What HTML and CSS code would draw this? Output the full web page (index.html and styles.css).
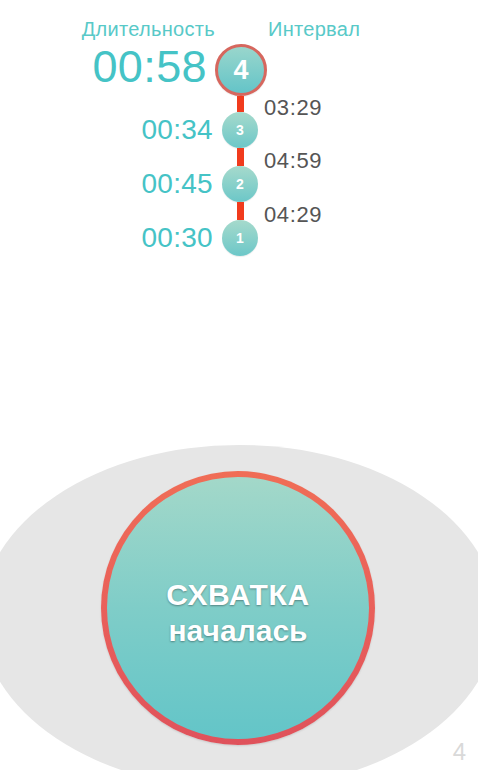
FILE: index.html
```html
<!DOCTYPE html>
<html lang="ru">
<head>
<meta charset="utf-8">
<title>Схватки</title>
<link rel="stylesheet" href="styles.css">
</head>
<body>
<div class="screen">
  <div class="timeline">
    <div class="head head-left">Длительность</div>
    <div></div>
    <div class="head head-right">Интервал</div>

    <div class="time time-big">00:58</div>
    <div class="node node-big"><span>4</span></div>
    <div></div>

    <div></div>
    <div class="link link-first"></div>
    <div class="gap">03:29</div>

    <div class="time">00:34</div>
    <div class="node"><span>3</span></div>
    <div></div>

    <div></div>
    <div class="link"></div>
    <div class="gap">04:59</div>

    <div class="time">00:45</div>
    <div class="node"><span>2</span></div>
    <div></div>

    <div></div>
    <div class="link"></div>
    <div class="gap">04:29</div>

    <div class="time">00:30</div>
    <div class="node"><span>1</span></div>
    <div></div>
  </div>

  <div class="stage">
    <div class="button-ring">
      <div class="button">
        <div class="button-title">СХВАТКА</div>
        <div class="button-sub">началась</div>
      </div>
    </div>
  </div>

  <div class="counter">4</div>
</div>
</body>
</html>
```

FILE: styles.css
```css
html, body {
  margin: 0;
  padding: 0;
  background: #ffffff;
}

.screen {
  position: relative;
  width: 478px;
  height: 770px;
  overflow: hidden;
  font-family: "Liberation Sans", Arial, sans-serif;
}

.timeline {
  display: grid;
  grid-template-columns: 214px 52px 1fr;
  padding-top: 18px;
  align-items: center;
}

.head {
  font-size: 20px;
  line-height: 22px;
  letter-spacing: 0.3px;
  color: #58c9c8;
  margin-bottom: 4px;
}

.head-left {
  text-align: right;
  margin-right: -1px;
}

.head-right {
  padding-left: 2px;
}

.time {
  text-align: right;
  font-size: 28px;
  line-height: 36px;
  letter-spacing: 0.3px;
  color: #45c3c6;
  padding-right: 1px;
}

.time-big {
  font-size: 45px;
  line-height: 46px;
  letter-spacing: 0.4px;
  padding-right: 7px;
  margin-bottom: 6px;
}

.node {
  justify-self: center;
  width: 36px;
  height: 36px;
  border-radius: 50%;
  background: linear-gradient(180deg, #a6dacc 0%, #6cc7c8 100%);
  display: flex;
  align-items: center;
  justify-content: center;
  color: #ffffff;
  font-weight: bold;
  font-size: 14px;
  box-shadow: 0 1px 1px rgba(0, 0, 0, 0.08);
}

.node-big {
  width: 46px;
  height: 46px;
  border: 3px solid #d6675e;
  font-size: 27px;
  background: linear-gradient(180deg, #99d6cc 0%, #64c4c8 100%);
  margin-left: 2px;
}

.link {
  justify-self: center;
  width: 7px;
  height: 18px;
  background: #f13b1d;
}

.link-first {
  height: 16px;
  margin-left: 1px;
}

.gap {
  font-size: 22px;
  line-height: 16px;
  letter-spacing: 0.6px;
  color: #555555;
  margin: 4px 0 -4px -2px;
}

.stage {
  width: 516px;
  height: 344px;
  margin: 189px 0 0 -19px;
  border-radius: 50%;
  background: #e6e6e6;
  display: flex;
  align-items: center;
  justify-content: center;
}

.button-ring {
  width: 274px;
  height: 274px;
  box-sizing: border-box;
  padding: 6px;
  border-radius: 50%;
  background: linear-gradient(180deg, #f06d56 0%, #e9605a 50%, #df525b 100%);
  margin-bottom: 18px;
  margin-right: 2px;
  box-shadow: 0 1px 2px rgba(0, 0, 0, 0.12);
}

.button {
  width: 100%;
  height: 100%;
  border-radius: 50%;
  background: linear-gradient(180deg, #a3d8c9 0%, #7fcdc8 50%, #63c5c8 100%);
  display: flex;
  flex-direction: column;
  align-items: center;
  justify-content: center;
  color: #ffffff;
  font-weight: bold;
  text-shadow: 0 1px 2px rgba(0, 0, 0, 0.35);
}

.button-title {
  font-size: 30px;
  line-height: 36px;
  letter-spacing: 0.6px;
}

.button-sub {
  font-size: 30px;
  line-height: 36px;
  margin-bottom: -10px;
}

.counter {
  position: absolute;
  right: 12px;
  bottom: 6px;
  font-size: 24px;
  line-height: 24px;
  color: #d9d9d9;
}
```
